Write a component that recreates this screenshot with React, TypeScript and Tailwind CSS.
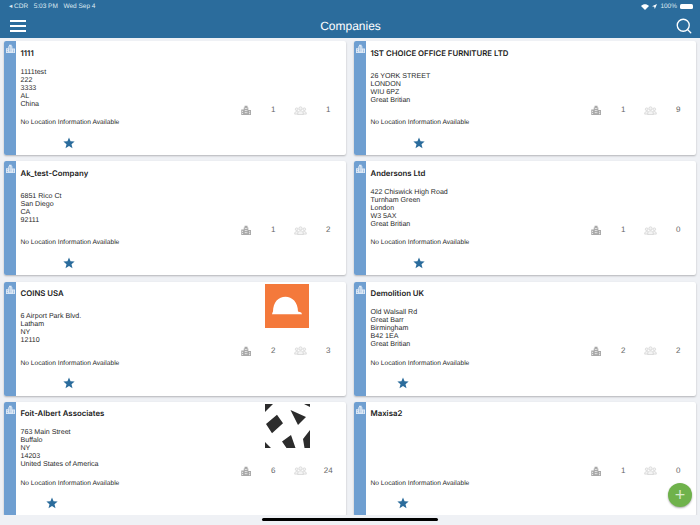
import React from "react";
import { Search } from "lucide-react";

const Building = ({ className, win }: { className: string; win: string }) => (
  <svg viewBox="0 0 12 12" className={className} fill="currentColor">
    <path d="M0 5.500h3V3h1V1h3.500v2h1v3H12v6H0z" />
    <g fill={win}>
      <rect x="4.300" y="3.500" width="1" height="1.300" />
      <rect x="6.200" y="3.500" width="1" height="1.300" />
      <rect x="4.300" y="6" width="1" height="1.300" />
      <rect x="6.200" y="6" width="1" height="1.300" />
      <rect x="1.200" y="7" width="1" height="1.300" />
      <rect x="9.600" y="7.500" width="1" height="1.300" />
      <rect x="1.200" y="9.500" width="1" height="1.300" />
      <rect x="4.300" y="8.500" width="1" height="1.300" />
      <rect x="6.200" y="8.500" width="1" height="1.300" />
      <rect x="9.600" y="9.700" width="1" height="1.300" />
    </g>
  </svg>
);

const People = () => (
  <svg viewBox="0 0 14 10" className="h-[9px] w-[13px] text-[#d2d2d2]" fill="#f4f4f4" stroke="currentColor" strokeWidth="0.800">
    <circle cx="2.800" cy="3.600" r="1.500" />
    <circle cx="11.200" cy="3.600" r="1.500" />
    <path d="M.500 9c0-2 1-3 2.300-3s2.300 1 2.300 3zM8.900 9c0-2 1-3 2.300-3s2.300 1 2.300 3z" />
    <circle cx="7" cy="2.700" r="1.800" />
    <path d="M3.800 9.500c0-3 1.300-4.200 3.200-4.200s3.200 1.200 3.200 4.200z" />
  </svg>
);

const Star = () => (
  <svg viewBox="0 0 24 24" className="h-[12px] w-[12px] text-[#2b6c9c]" fill="currentColor">
    <path d="M12 1l3.100 7.600 8.200.6-6.300 5.300 2 8L12 18.200 5 22.500l2-8L.700 9.200l8.200-.6z" />
  </svg>
);

const Helmet = () => (
  <svg viewBox="0 0 44 44" className="h-[44px] w-[44px]">
    <rect width="44" height="44" fill="#f4793b" />
    <path d="M7 30.300h30l-.8-1.800-3.200-1C33 18 27 12.700 20.500 12.700 13.500 12.700 8 18 8 27.500l-.5 1z" fill="#fff" />
  </svg>
);

const Shards = () => (
  <svg viewBox="0 0 45 45" className="h-[45px] w-[45px]" fill="#2c2c2c">
    <path d="M0 0h8L0 8zM39 0h6v3zM12 10.700l6 8.600-11 10-6-9.300zM25.500 6L41 13l-8 8zM45 26v18h-5.500L38 35zM26 31l4.500 13h-9L17 37.500zM0 38l6 6H0z" />
  </svg>
);

type C = {
  name: string;
  lines: string[];
  a: number;
  b: number;
  star: string;
  logo?: "helmet" | "shards";
};

const cards: C[] = [
  { name: "1111", lines: ["1111test", "222", "3333", "AL", "China"], a: 1, b: 1, star: "ml-[42.500px]" },
  { name: "1ST CHOICE OFFICE FURNITURE LTD", lines: ["26 YORK STREET", "LONDON", "WIU 6PZ", "Great Britian"], a: 1, b: 9, star: "ml-[42.500px]" },
  { name: "Ak_test-Company", lines: ["6851 Rico Ct", "San Diego", "CA", "92111"], a: 1, b: 2, star: "ml-[42.500px]" },
  { name: "Andersons Ltd", lines: ["422 Chiswick High Road", "Turnham Green", "London", "W3 5AX", "Great Britian"], a: 1, b: 0, star: "ml-[42.500px]" },
  { name: "COINS USA", lines: ["6 Airport Park Blvd.", "Latham", "NY", "12110"], a: 2, b: 3, star: "ml-[42.500px]", logo: "helmet" },
  { name: "Demolition UK", lines: ["Old Walsall Rd", "Great Barr", "Birmingham", "B42 1EA", "Great Britian"], a: 2, b: 2, star: "ml-[26px]" },
  { name: "Foit-Albert Associates", lines: ["763 Main Street", "Buffalo", "NY", "14203", "United States of America"], a: 6, b: 24, star: "ml-[25px]", logo: "shards" },
  { name: "Maxisa2", lines: [], a: 1, b: 0, star: "ml-[26px]" },
];

function Card({ c }: { c: C }) {
  return (
    <div className="flex h-[114px] overflow-hidden rounded-[2px] bg-white shadow-[0_1px_2px_rgba(0,0,0,0.25)]">
      <div className="w-[12.5px] shrink-0 bg-[#6f9fd1] pl-[2px] pt-[3px]">
        <Building className="h-[9px] w-[9px] text-[#dfe9f5]" win="#6f9fd1" />
      </div>
      <div className="min-w-0 flex-1 pl-[4.500px]">
        <div className="mt-[6.500px] h-[10px] font-['Inter','Liberation_Sans',sans-serif] text-[7.800px] leading-[10px] font-semibold text-[#1a1a1a]">{c.name}</div>
        <div className="mt-[6px] flex h-[48px] flex-col justify-center text-[7.100px] leading-[8px] text-[#2a2a2a]">
          {c.lines.map((l) => (
            <div key={l}>{l}</div>
          ))}
        </div>
        <div className="mt-[7.500px] h-[8px] text-[6.650px] leading-[8px] text-[#2a2a2a]">No Location Information Available</div>
        <div className={`mt-[9.500px] ${c.star}`}>
          <Star />
        </div>
      </div>
      <div className="mr-[3.500px] w-[110px] shrink-0">
        <div className="mt-[2px] flex h-[44px] justify-center">
          {c.logo === "helmet" && <Helmet />}
          {c.logo === "shards" && <Shards />}
        </div>
        <div className="mt-[16px] grid h-[14px] grid-cols-4 items-center justify-items-center text-[8px] text-[#666666]">
          <Building className="h-[10px] w-[10.500px] text-[#a8a8a8]" win="#ffffff" />
          <span>{c.a}</span>
          <People />
          <span>{c.b}</span>
        </div>
      </div>
    </div>
  );
}

export default function App() {
  return (
    <div className="relative flex h-[525px] w-[700px] flex-col overflow-hidden bg-[#eff1f5] font-['Liberation_Sans',sans-serif] antialiased [text-rendering:geometricPrecision]">
      <header className="h-[38px] shrink-0 bg-[#2b6c9c] text-white">
        <div className="flex h-[13px] items-center justify-between pl-[9px] pr-[7px] text-[6.500px] text-[#dfe9f1]">
          <div className="flex items-center gap-[5.500px]">
            <span>◂ CDR</span>
            <span>5:03 PM</span>
            <span>Wed Sep 4</span>
          </div>
          <div className="flex items-center gap-[3px]">
            <svg viewBox="0 0 12 9" className="h-[6px] w-[8px]" fill="#fff">
              <path d="M6 9L0 3c3.500-3.500 8.500-3.500 12 0z" />
            </svg>
            <svg viewBox="0 0 8 8" className="h-[5px] w-[5px]" fill="#fff">
              <path d="M8 0L4.500 8 3.500 4.500 0 3.500z" />
            </svg>
            <span>100%</span>
            <div className="h-[5.500px] w-[13px] rounded-[1.500px] bg-white" />
          </div>
        </div>
        <div className="flex h-[25px] items-center justify-between pl-[10px] pr-[7px]">
          <div className="flex w-[16px] flex-col gap-[3px]">
            <div className="h-[2px] bg-white" />
            <div className="h-[2px] bg-white" />
            <div className="h-[2px] bg-white" />
          </div>
          <div className="text-[12px] leading-[14px]">Companies</div>
          <Search className="h-[18px] w-[18px] text-white" strokeWidth={1.800} />
        </div>
      </header>
      <main className="mt-[3px] h-[474px] shrink-0 overflow-hidden pl-[3.500px] pr-[4.500px]">
        <div className="grid grid-cols-[342px_342px] gap-x-[8px] gap-y-[6.300px]">
          {cards.map((c) => (
            <Card key={c.name} c={c} />
          ))}
        </div>
      </main>
      <div className="flex flex-1 justify-center pt-[3px]">
        <div className="h-[2.500px] w-[176px] rounded-full bg-black" />
      </div>
      <button className="absolute left-[668px] top-[483px] flex h-[24px] w-[24px] items-center justify-center rounded-full bg-[#6fb24b] text-[18px] font-light leading-none text-[#d8ebcc] shadow-[0_1px_2px_rgba(0,0,0,0.35)]">
        +
      </button>
    </div>
  );
}
